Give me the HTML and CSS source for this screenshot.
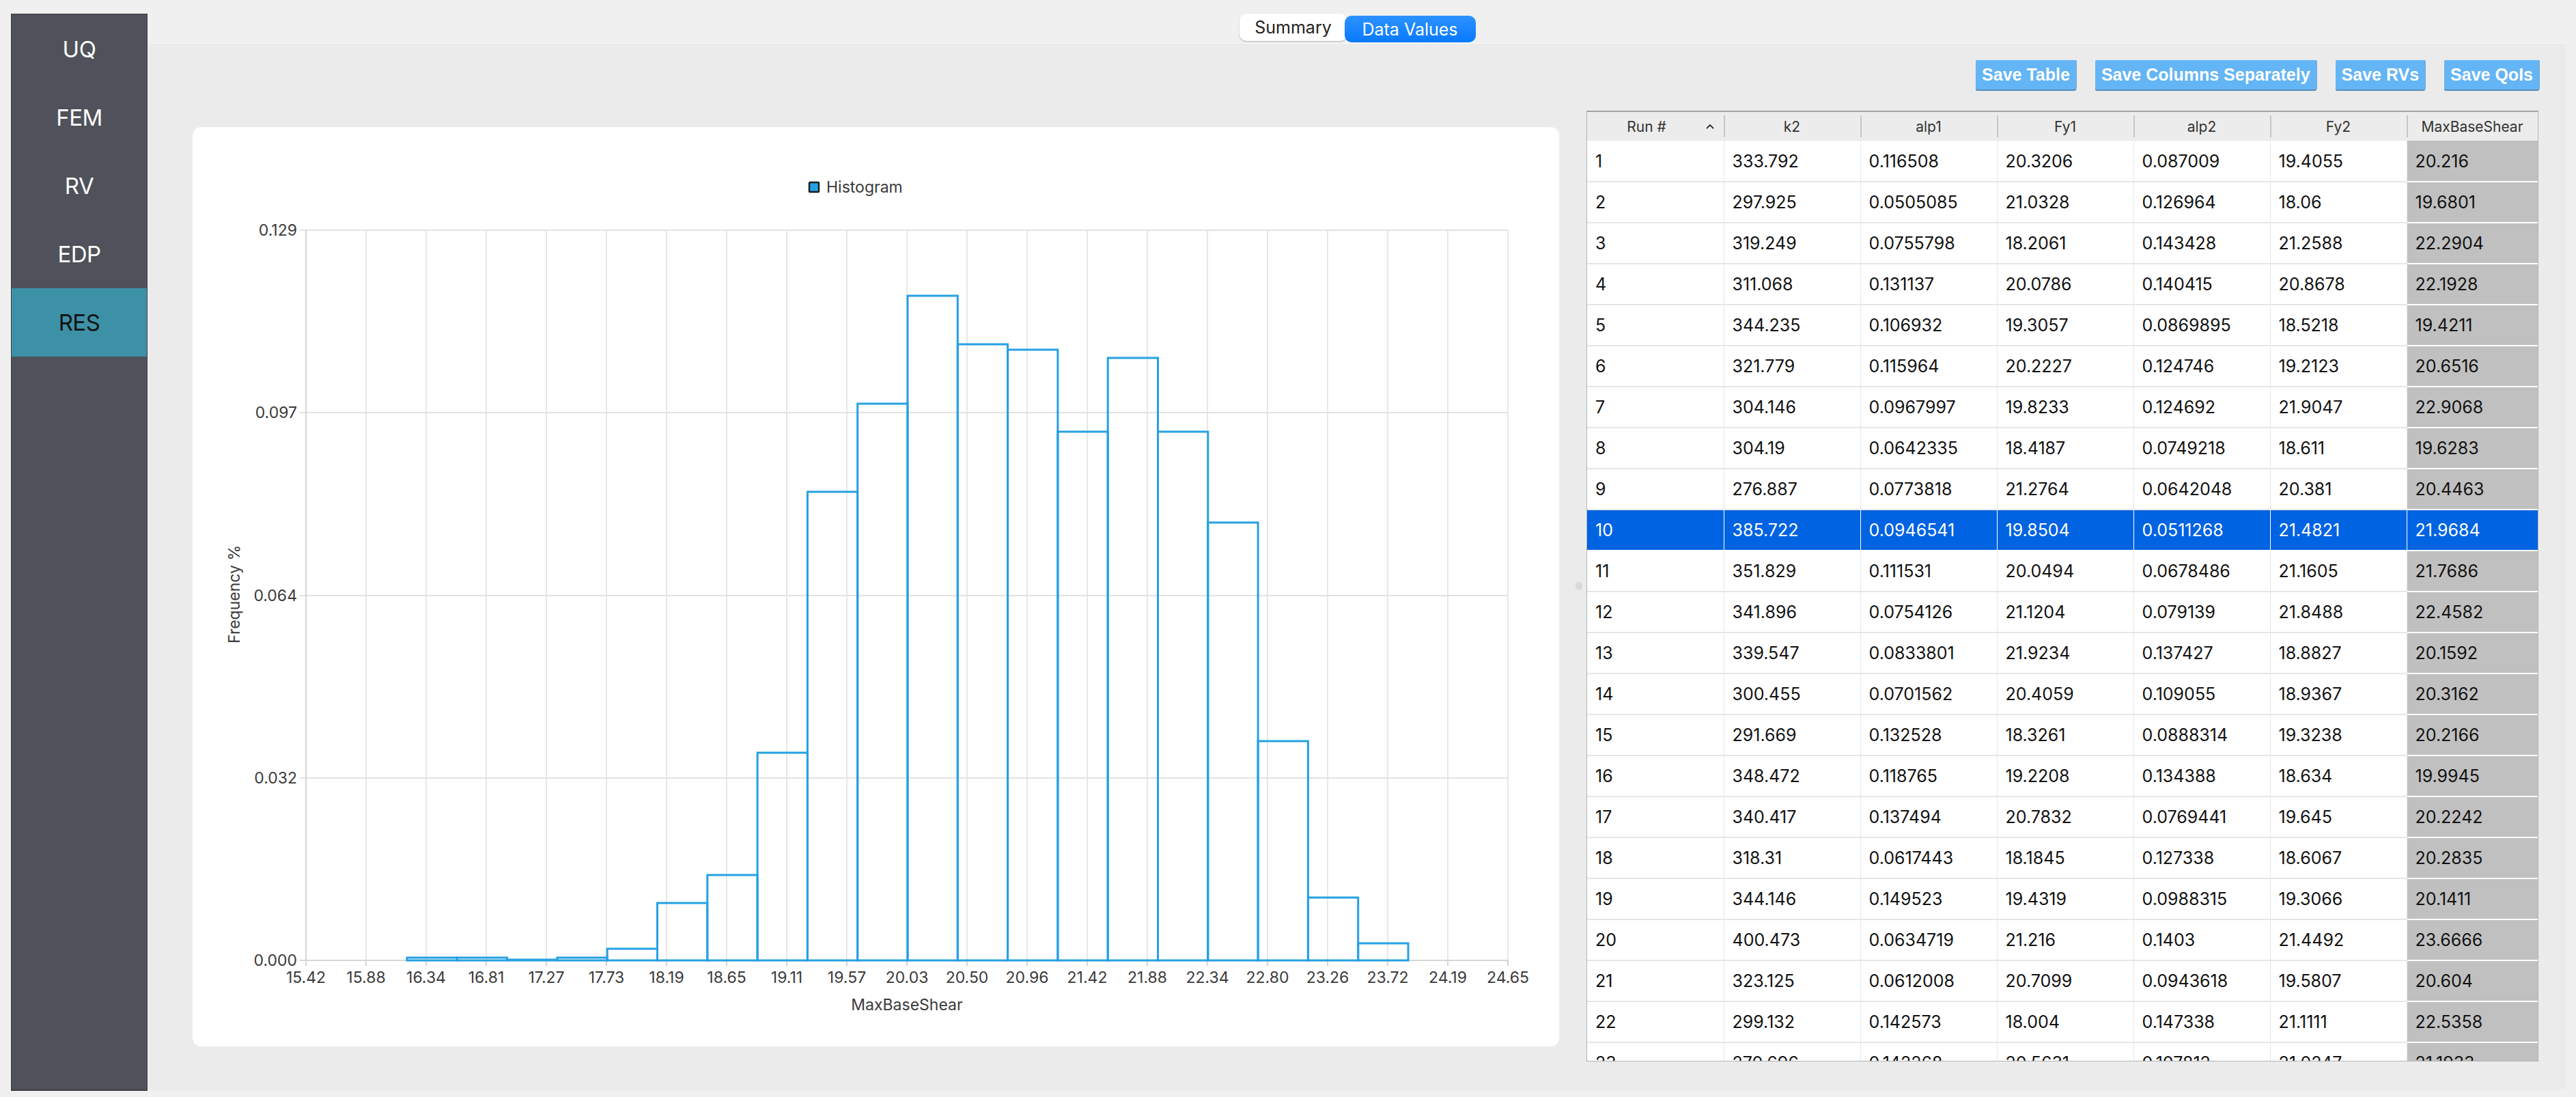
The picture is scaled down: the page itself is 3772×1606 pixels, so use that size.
FILE: index.html
```html
<!DOCTYPE html>
<html lang="en">
<head>
<meta charset="utf-8">
<title>Results - Data Values</title>
<link rel="stylesheet" href="styles.css">
</head>
<body>
<nav class="sidebar">
  <div class="nav-item">UQ</div>
  <div class="nav-item">FEM</div>
  <div class="nav-item">RV</div>
  <div class="nav-item">EDP</div>
  <div class="nav-item active">RES</div>
</nav>
<div class="app">
  <div class="topbar">
    <div class="tab">Summary</div>
    <div class="tab tab-active">Data Values</div>
  </div>
  <main class="main">
    <section class="chart-pane">
      <div class="card">
        <svg class="chart" width="2001" height="1346" viewBox="0 0 2001 1346" xmlns="http://www.w3.org/2000/svg">
          <g class="legend">
            <rect x="903" y="81" width="14" height="14" fill="#25a1e2" stroke="#1c1c1c" stroke-width="2.5" rx="1"/>
            <text x="928" y="96" class="lbl">Histogram</text>
          </g>
          <g stroke="#e2e2e2" stroke-width="1.6">
            <line x1="254" y1="151" x2="254" y2="1220"/>
            <line x1="342" y1="151" x2="342" y2="1220"/>
            <line x1="430" y1="151" x2="430" y2="1220"/>
            <line x1="518" y1="151" x2="518" y2="1220"/>
            <line x1="606" y1="151" x2="606" y2="1220"/>
            <line x1="694" y1="151" x2="694" y2="1220"/>
            <line x1="782" y1="151" x2="782" y2="1220"/>
            <line x1="870" y1="151" x2="870" y2="1220"/>
            <line x1="958" y1="151" x2="958" y2="1220"/>
            <line x1="1046" y1="151" x2="1046" y2="1220"/>
            <line x1="1134" y1="151" x2="1134" y2="1220"/>
            <line x1="1222" y1="151" x2="1222" y2="1220"/>
            <line x1="1310" y1="151" x2="1310" y2="1220"/>
            <line x1="1398" y1="151" x2="1398" y2="1220"/>
            <line x1="1486" y1="151" x2="1486" y2="1220"/>
            <line x1="1574" y1="151" x2="1574" y2="1220"/>
            <line x1="1662" y1="151" x2="1662" y2="1220"/>
            <line x1="1750" y1="151" x2="1750" y2="1220"/>
            <line x1="1838" y1="151" x2="1838" y2="1220"/>
            <line x1="1926" y1="151" x2="1926" y2="1220"/>
          </g>
          <g stroke="#e2e2e2" stroke-width="2.2">
            <line x1="157" y1="151" x2="1926" y2="151"/>
            <line x1="157" y1="418" x2="1926" y2="418"/>
            <line x1="157" y1="686" x2="1926" y2="686"/>
            <line x1="157" y1="953" x2="1926" y2="953"/>
          </g>
          <g stroke="#d6d6d6" stroke-width="2.2">
            <line x1="166" y1="151" x2="166" y2="1228"/>
            <line x1="157" y1="1220" x2="1926" y2="1220"/>
            <line x1="254" y1="1220" x2="254" y2="1228"/>
            <line x1="342" y1="1220" x2="342" y2="1228"/>
            <line x1="430" y1="1220" x2="430" y2="1228"/>
            <line x1="518" y1="1220" x2="518" y2="1228"/>
            <line x1="606" y1="1220" x2="606" y2="1228"/>
            <line x1="694" y1="1220" x2="694" y2="1228"/>
            <line x1="782" y1="1220" x2="782" y2="1228"/>
            <line x1="870" y1="1220" x2="870" y2="1228"/>
            <line x1="958" y1="1220" x2="958" y2="1228"/>
            <line x1="1046" y1="1220" x2="1046" y2="1228"/>
            <line x1="1134" y1="1220" x2="1134" y2="1228"/>
            <line x1="1222" y1="1220" x2="1222" y2="1228"/>
            <line x1="1310" y1="1220" x2="1310" y2="1228"/>
            <line x1="1398" y1="1220" x2="1398" y2="1228"/>
            <line x1="1486" y1="1220" x2="1486" y2="1228"/>
            <line x1="1574" y1="1220" x2="1574" y2="1228"/>
            <line x1="1662" y1="1220" x2="1662" y2="1228"/>
            <line x1="1750" y1="1220" x2="1750" y2="1228"/>
            <line x1="1838" y1="1220" x2="1838" y2="1228"/>
            <line x1="1926" y1="1220" x2="1926" y2="1228"/>
          </g>
          <g fill="none" stroke="#25a1e2" stroke-width="3">
            <rect x="314" y="1216" width="73.3" height="4"/>
            <rect x="387.3" y="1216" width="73.3" height="4"/>
            <rect x="460.6" y="1219" width="73.3" height="1"/>
            <rect x="533.9" y="1216" width="73.3" height="4"/>
            <rect x="607.2" y="1203" width="73.3" height="17"/>
            <rect x="680.5" y="1136" width="73.3" height="84"/>
            <rect x="753.8" y="1095" width="73.3" height="125"/>
            <rect x="827.1" y="916" width="73.3" height="304"/>
            <rect x="900.4" y="534" width="73.3" height="686"/>
            <rect x="973.7" y="405" width="73.3" height="815"/>
            <rect x="1047" y="247" width="73.3" height="973"/>
            <rect x="1120.3" y="318" width="73.3" height="902"/>
            <rect x="1193.6" y="326" width="73.3" height="894"/>
            <rect x="1266.9" y="446" width="73.3" height="774"/>
            <rect x="1340.2" y="338" width="73.3" height="882"/>
            <rect x="1413.5" y="446" width="73.3" height="774"/>
            <rect x="1486.8" y="579" width="73.3" height="641"/>
            <rect x="1560.1" y="899" width="73.3" height="321"/>
            <rect x="1633.4" y="1128" width="73.3" height="92"/>
            <rect x="1706.7" y="1195" width="73.3" height="25"/>
          </g>
          <g class="lbl" text-anchor="end">
            <text x="153" y="159">0.129</text>
            <text x="153" y="426">0.097</text>
            <text x="153" y="694">0.064</text>
            <text x="153" y="961">0.032</text>
            <text x="153" y="1228">0.000</text>
          </g>
          <g class="lbl" text-anchor="middle">
            <text x="166" y="1253">15.42</text>
            <text x="254" y="1253">15.88</text>
            <text x="342" y="1253">16.34</text>
            <text x="430" y="1253">16.81</text>
            <text x="518" y="1253">17.27</text>
            <text x="606" y="1253">17.73</text>
            <text x="694" y="1253">18.19</text>
            <text x="782" y="1253">18.65</text>
            <text x="870" y="1253">19.11</text>
            <text x="958" y="1253">19.57</text>
            <text x="1046" y="1253">20.03</text>
            <text x="1134" y="1253">20.50</text>
            <text x="1222" y="1253">20.96</text>
            <text x="1310" y="1253">21.42</text>
            <text x="1398" y="1253">21.88</text>
            <text x="1486" y="1253">22.34</text>
            <text x="1574" y="1253">22.80</text>
            <text x="1662" y="1253">23.26</text>
            <text x="1750" y="1253">23.72</text>
            <text x="1838" y="1253">24.19</text>
            <text x="1926" y="1253">24.65</text>
            <text x="1046" y="1293">MaxBaseShear</text>
            <text transform="translate(61,684) rotate(-90)" y="8">Frequency %</text>
          </g>
        </svg>
      </div>
    </section>
    <div class="splitter"><span class="handle"></span></div>
    <section class="data-pane">
      <div class="actions">
        <button class="btn">Save Table</button>
        <button class="btn">Save Columns Separately</button>
        <button class="btn">Save RVs</button>
        <button class="btn">Save QoIs</button>
      </div>
      <div class="table-wrap">
        <table class="grid">
          <colgroup>
            <col class="c"><col class="c"><col class="c"><col class="c"><col class="c"><col class="c"><col class="c-last">
          </colgroup>
          <thead>
            <tr>
              <th class="run"><div class="run-head"><span class="run-label">Run #</span><svg class="caret" width="12" height="8" viewBox="0 0 12 8"><path d="M1.5 6.5 L6 2 L10.5 6.5" fill="none" stroke="#333" stroke-width="1.8" stroke-linecap="round" stroke-linejoin="round"/></svg></div></th>
              <th>k2</th><th>alp1</th><th>Fy1</th><th>alp2</th><th>Fy2</th><th>MaxBaseShear</th>
            </tr>
          </thead>
          <tbody>
            <tr><td>1</td><td>333.792</td><td>0.116508</td><td>20.3206</td><td>0.087009</td><td>19.4055</td><td class="qoi">20.216</td></tr>
            <tr><td>2</td><td>297.925</td><td>0.0505085</td><td>21.0328</td><td>0.126964</td><td>18.06</td><td class="qoi">19.6801</td></tr>
            <tr><td>3</td><td>319.249</td><td>0.0755798</td><td>18.2061</td><td>0.143428</td><td>21.2588</td><td class="qoi">22.2904</td></tr>
            <tr><td>4</td><td>311.068</td><td>0.131137</td><td>20.0786</td><td>0.140415</td><td>20.8678</td><td class="qoi">22.1928</td></tr>
            <tr><td>5</td><td>344.235</td><td>0.106932</td><td>19.3057</td><td>0.0869895</td><td>18.5218</td><td class="qoi">19.4211</td></tr>
            <tr><td>6</td><td>321.779</td><td>0.115964</td><td>20.2227</td><td>0.124746</td><td>19.2123</td><td class="qoi">20.6516</td></tr>
            <tr><td>7</td><td>304.146</td><td>0.0967997</td><td>19.8233</td><td>0.124692</td><td>21.9047</td><td class="qoi">22.9068</td></tr>
            <tr><td>8</td><td>304.19</td><td>0.0642335</td><td>18.4187</td><td>0.0749218</td><td>18.611</td><td class="qoi">19.6283</td></tr>
            <tr><td>9</td><td>276.887</td><td>0.0773818</td><td>21.2764</td><td>0.0642048</td><td>20.381</td><td class="qoi">20.4463</td></tr>
            <tr class="selected"><td>10</td><td>385.722</td><td>0.0946541</td><td>19.8504</td><td>0.0511268</td><td>21.4821</td><td class="qoi">21.9684</td></tr>
            <tr><td>11</td><td>351.829</td><td>0.111531</td><td>20.0494</td><td>0.0678486</td><td>21.1605</td><td class="qoi">21.7686</td></tr>
            <tr><td>12</td><td>341.896</td><td>0.0754126</td><td>21.1204</td><td>0.079139</td><td>21.8488</td><td class="qoi">22.4582</td></tr>
            <tr><td>13</td><td>339.547</td><td>0.0833801</td><td>21.9234</td><td>0.137427</td><td>18.8827</td><td class="qoi">20.1592</td></tr>
            <tr><td>14</td><td>300.455</td><td>0.0701562</td><td>20.4059</td><td>0.109055</td><td>18.9367</td><td class="qoi">20.3162</td></tr>
            <tr><td>15</td><td>291.669</td><td>0.132528</td><td>18.3261</td><td>0.0888314</td><td>19.3238</td><td class="qoi">20.2166</td></tr>
            <tr><td>16</td><td>348.472</td><td>0.118765</td><td>19.2208</td><td>0.134388</td><td>18.634</td><td class="qoi">19.9945</td></tr>
            <tr><td>17</td><td>340.417</td><td>0.137494</td><td>20.7832</td><td>0.0769441</td><td>19.645</td><td class="qoi">20.2242</td></tr>
            <tr><td>18</td><td>318.31</td><td>0.0617443</td><td>18.1845</td><td>0.127338</td><td>18.6067</td><td class="qoi">20.2835</td></tr>
            <tr><td>19</td><td>344.146</td><td>0.149523</td><td>19.4319</td><td>0.0988315</td><td>19.3066</td><td class="qoi">20.1411</td></tr>
            <tr><td>20</td><td>400.473</td><td>0.0634719</td><td>21.216</td><td>0.1403</td><td>21.4492</td><td class="qoi">23.6666</td></tr>
            <tr><td>21</td><td>323.125</td><td>0.0612008</td><td>20.7099</td><td>0.0943618</td><td>19.5807</td><td class="qoi">20.604</td></tr>
            <tr><td>22</td><td>299.132</td><td>0.142573</td><td>18.004</td><td>0.147338</td><td>21.1111</td><td class="qoi">22.5358</td></tr>
            <tr><td>23</td><td>270.696</td><td>0.142268</td><td>20.5631</td><td>0.107812</td><td>21.0247</td><td class="qoi">21.1933</td></tr>
          </tbody>
        </table>
      </div>
    </section>
  </main>
</div>
</body>
</html>
```

FILE: styles.css
```css
* { box-sizing: border-box; }

html, body {
  margin: 0;
  padding: 0;
}

body {
  width: 3772px;
  height: 1606px;
  background: #f0f0f0;
  display: flex;
  align-items: flex-start;
  overflow: hidden;
  font-family: Inter, "Noto Sans", "Liberation Sans", sans-serif;
  color: #222;
}

/* ---------- sidebar ---------- */
.sidebar {
  margin: 20px 0 0 16px;
  width: 200px;
  height: 1577px;
  background: #4f525a;
  border: 1px solid #3a3c41;
  border-bottom-width: 2px;
  padding-top: 1px;
  display: flex;
  flex-direction: column;
}

.nav-item {
  height: 100px;
  display: flex;
  align-items: center;
  justify-content: center;
  color: #ffffff;
  font-size: 33px;
  letter-spacing: -0.5px;
}

.nav-item.active {
  background: #3d91a7;
  color: #111;
}

/* ---------- right side ---------- */
.app {
  margin-left: 1px;
  width: 3541px;
  display: flex;
  flex-direction: column;
}

.topbar {
  height: 63px;
  padding-top: 20px;
  display: flex;
  justify-content: center;
  align-items: flex-start;
}

.tab {
  height: 40px;
  width: 158px;
  display: flex;
  align-items: center;
  justify-content: center;
  font-size: 25px;
  border-radius: 10px;
  background: #ffffff;
  color: #222;
  box-shadow: 0 1px 2px rgba(0, 0, 0, 0.28);
}

.tab-active {
  width: 192px;
  height: 39px;
  margin-top: 3px;
  margin-left: -4px;
  color: #ffffff;
  background: linear-gradient(#2d92ff, #0879ff);
  box-shadow: none;
}

.main {
  height: 1533px;
  background: #ebebeb;
  border-top: 1px solid #f7f7f7;
  display: flex;
  padding-right: 41px;
}

.chart-pane {
  width: 2083px;
  flex: none;
  padding: 122px 17px 64px 65px;
}

.card {
  width: 100%;
  height: 100%;
  background: #ffffff;
  border-radius: 12px;
  overflow: hidden;
}

.chart {
  display: block;
}

.lbl {
  font-family: Inter, "Noto Sans", sans-serif;
  font-size: 23px;
  fill: #3a3a3a;
}

.splitter {
  width: 23px;
  flex: none;
  padding: 98px 0 42px;
  display: flex;
  align-items: center;
  justify-content: center;
}

.handle {
  display: block;
  width: 10px;
  height: 12px;
  border-radius: 5px;
  background: #d9d9d9;
}

.data-pane {
  width: 1394px;
  flex: none;
  padding-top: 24px;
  padding-bottom: 42px;
  display: flex;
  flex-direction: column;
}

.actions {
  height: 45px;
  display: flex;
  justify-content: flex-end;
  gap: 28px;
  margin-right: -1px;
  margin-bottom: 29px;
}

.btn {
  height: 43px;
  padding: 0 9px;
  border: none;
  border-radius: 2px;
  background: #64b5f6;
  color: #ffffff;
  font-family: "Liberation Sans", Arial, sans-serif;
  font-weight: bold;
  font-size: 25px;
  box-shadow: 0 2px 0 #5a8db7, 1px 0 0 #7fa9c9;
  cursor: pointer;
}

.table-wrap {
  height: 1392px;
  overflow: hidden;
  background: #ffffff;
  border: 1px solid #b4b4b4;
  border-top: 2px solid #a2a2a2;
}

.grid {
  border-collapse: collapse;
  table-layout: fixed;
  width: 1392px;
  font-family: Inter, "Noto Sans", sans-serif;
}

.grid col.c { width: 200px; }
.grid col.c-last { width: 192px; }

.grid th {
  position: relative;
  height: 42px;
  padding: 0;
  background: #ececec;
  font-weight: normal;
  font-size: 21px;
  color: #333;
  text-align: center;
}

.grid th + th::before {
  content: "";
  position: absolute;
  left: 0;
  top: 5px;
  bottom: 5px;
  width: 2px;
  background: #c6c6c6;
}

.run-head {
  display: flex;
  align-items: center;
  padding-right: 14px;
}

.run-label {
  flex: 1;
  text-align: center;
}

.caret {
  display: block;
}

.grid td {
  height: 60px;
  padding: 0 0 0 12px;
  font-size: 25px;
  color: #111;
  white-space: nowrap;
  border-bottom: 2px solid #e6e6e6;
  border-right: 1px solid #e6e6e6;
}

.grid td.qoi {
  background: #c0c0c0;
  border-bottom-color: #ffffff;
  border-right: none;
}

.grid tr.selected td {
  background: #0063e1;
  color: #ffffff;
  border-right-color: #ffffff;
  border-bottom-color: #ffffff;
}
```
